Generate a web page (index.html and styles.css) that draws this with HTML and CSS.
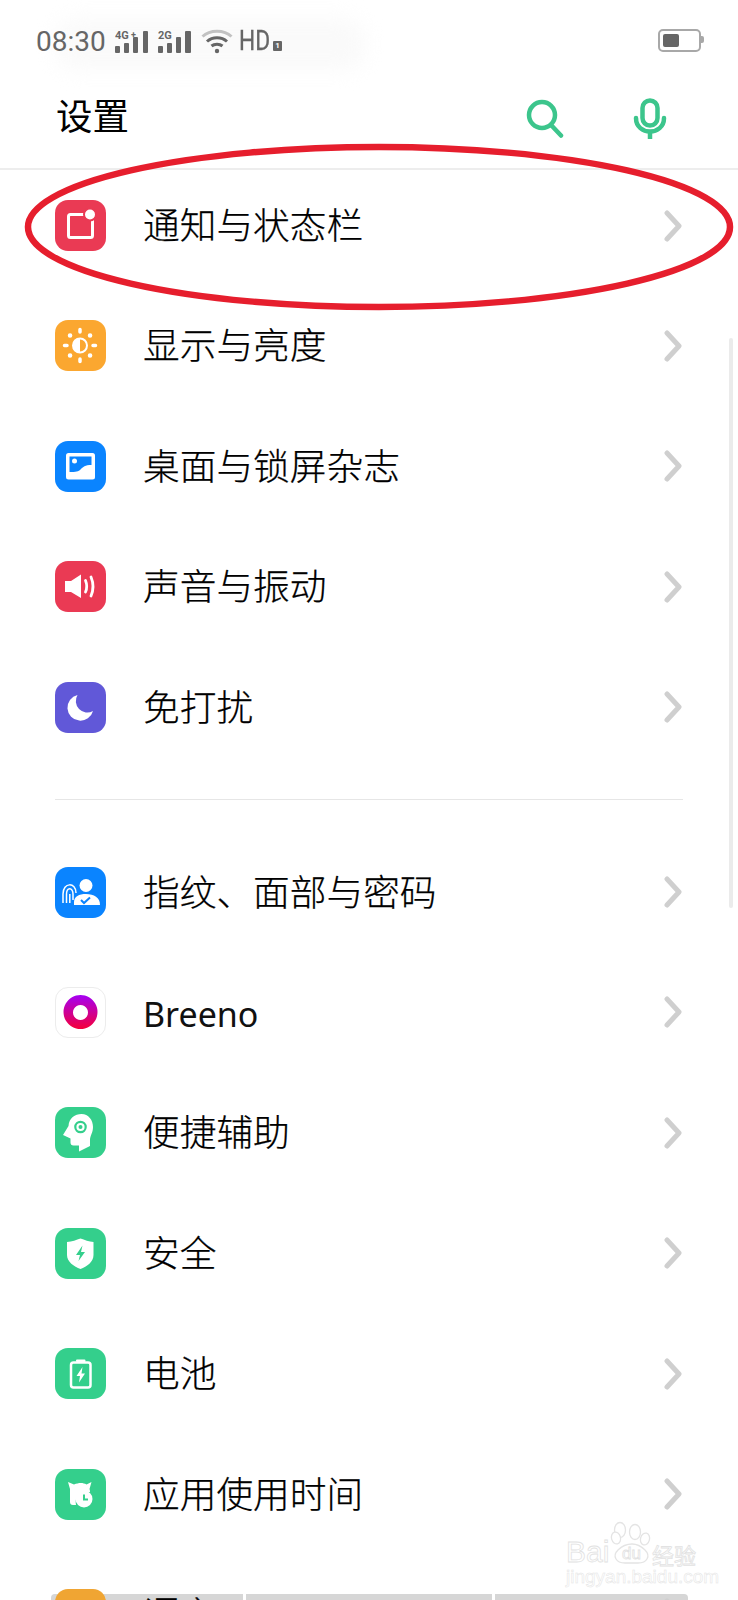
FILE: index.html
```html
<!DOCTYPE html>
<html lang="zh-CN">
<head>
  <meta charset="UTF-8" />
  <meta name="viewport" content="width=device-width, initial-scale=1.0"/>
  <title>设置</title>
  <link rel="stylesheet" href="styles.css">
</head>
<body>
<div class="phone">
  <div class="smudge"></div>

  <!-- status bar -->
  <div class="status">
    <span class="time">08:30</span>
    <svg class="sig-a" width="34" height="24" viewBox="0 0 34 24">
      <text x="0" y="8.5" class="sig-text">4G</text>
      <text x="16" y="8" class="sig-text-sm">+</text>
      <rect x="0" y="16" width="5" height="7" rx="1"/>
      <rect x="9" y="13" width="5" height="10" rx="1"/>
      <rect x="18" y="7" width="5" height="16" rx="1"/>
      <rect x="28" y="1" width="5" height="22" rx="1"/>
    </svg>
    <svg class="sig-b" width="34" height="24" viewBox="0 0 34 24">
      <text x="0" y="8.5" class="sig-text">2G</text>
      <rect x="0" y="16" width="5" height="7" rx="1"/>
      <rect x="9" y="13" width="5" height="10" rx="1"/>
      <rect x="18" y="7" width="5" height="16" rx="1"/>
      <rect x="27" y="1" width="6" height="22" rx="1"/>
    </svg>
    <svg class="wifi" width="32" height="25" viewBox="0 0 32 25" fill="none" stroke-linecap="butt">
      <path d="M1.5 7.5 C9 0.5 23 0.5 30.5 7.5" stroke="#c2c2c2" stroke-width="3"/>
      <path d="M6 12.5 C11.5 7.5 20.5 7.5 26 12.5" stroke="#666" stroke-width="3"/>
      <path d="M10.5 17 C13.5 14.5 18.5 14.5 21.5 17" stroke="#666" stroke-width="3"/>
      <circle cx="16" cy="22" r="2.2" fill="#666"/>
    </svg>
    <span class="hd">HD</span>
    <span class="sim">1</span>
    <span class="battery"><span class="battery-level"></span></span>
  </div>

  <!-- title bar -->
  <header class="title-bar">
    <h1>设置</h1>
    <svg class="tool-search" width="38" height="40" viewBox="0 0 38 40" fill="none" stroke="#3cc58c" stroke-width="4.5" stroke-linecap="round">
      <circle cx="16" cy="16" r="13"/>
      <path d="M26 27 L35 36.5"/>
    </svg>
    <svg class="tool-mic" width="34" height="42" viewBox="0 0 34 42" fill="none" stroke="#3cc58c" stroke-width="4.5">
      <rect x="9.5" y="2.5" width="15" height="25" rx="7.5"/>
      <path d="M3 20 C3 38 31 38 31 20" stroke-linecap="round"/>
      <path d="M17 33 V41"/>
    </svg>
  </header>

  <ul class="group group-one">
    <li class="row">
      <span class="icon red">
        <svg viewBox="0 0 51 51">
          <rect x="13.5" y="14.5" width="24" height="23" rx="2" fill="none" stroke="#fff" stroke-width="3"/>
          <circle cx="35" cy="14.5" r="6" fill="#fff" stroke="#ea3a54" stroke-width="2"/>
        </svg>
      </span>
      <span class="label">通知与状态栏</span>
      <svg class="chev" viewBox="0 0 18 32"><path d="M3 3 L15 16 L3 29"/></svg>
    </li>
    <li class="row">
      <span class="icon orange">
        <svg viewBox="0 0 51 51">
          <circle cx="25" cy="25.5" r="7" fill="none" stroke="#fff" stroke-width="2"/>
          <path d="M25 18.5 a7 7 0 0 0 0 14 z" fill="#fff"/>
          <g stroke="#fff" stroke-width="3.5" stroke-linecap="round">
            <path d="M25 9.5 v2.5 M25 39 v2.5 M9.5 25.5 h2.5 M38 25.5 h2.5"/>
            <path d="M15 15.5 h.1 M35 15.5 h.1 M15 35.5 h.1 M35 35.5 h.1" stroke-width="4.5"/>
          </g>
        </svg>
      </span>
      <span class="label">显示与亮度</span>
      <svg class="chev" viewBox="0 0 18 32"><path d="M3 3 L15 16 L3 29"/></svg>
    </li>
    <li class="row">
      <span class="icon blue">
        <svg viewBox="0 0 51 51">
          <rect x="11" y="12" width="29" height="26.5" rx="2.5" fill="#fff"/>
          <path d="M14.5 15.5 H36.5 V24 C30 24 28 26 25.5 28.5 C23.5 30.5 21 31 14.5 31 Z" fill="#0a84ff"/>
          <circle cx="19.5" cy="20" r="2.5" fill="#fff"/>
        </svg>
      </span>
      <span class="label">桌面与锁屏杂志</span>
      <svg class="chev" viewBox="0 0 18 32"><path d="M3 3 L15 16 L3 29"/></svg>
    </li>
    <li class="row">
      <span class="icon red">
        <svg viewBox="0 0 51 51">
          <path d="M10 20 H16 L26 13.5 V37 L16 31 H10 Z" fill="#fff"/>
          <g fill="none" stroke="#fff" stroke-width="2.8" stroke-linecap="round">
            <path d="M30.5 19.5 Q33 25.5 30.5 31"/>
            <path d="M36 16 Q40 25.5 36 35"/>
          </g>
        </svg>
      </span>
      <span class="label">声音与振动</span>
      <svg class="chev" viewBox="0 0 18 32"><path d="M3 3 L15 16 L3 29"/></svg>
    </li>
    <li class="row">
      <span class="icon purple">
        <svg viewBox="0 0 51 51">
          <path d="M22.5 13 A13 13 0 1 0 38 29 A11.5 11.5 0 0 1 22.5 13 Z" fill="#fff"/>
        </svg>
      </span>
      <span class="label">免打扰</span>
      <svg class="chev" viewBox="0 0 18 32"><path d="M3 3 L15 16 L3 29"/></svg>
    </li>
  </ul>

  <div class="divider"></div>

  <ul class="group">
    <li class="row">
      <span class="icon blue">
        <svg viewBox="0 0 51 51">
          <circle cx="31" cy="18.5" r="6.5" fill="#fff"/>
          <path d="M19 38 V35 C19 29.5 24 27 31 27 C39 27 45 30.5 45 38 Z" fill="#fff"/>
          <path d="M26 33 L29 36 L35 30.5" fill="none" stroke="#0a84ff" stroke-width="2"/>
          <g fill="none" stroke="#fff" stroke-width="1.5">
            <path d="M8 36 V27 C8 15 21 15 21 26"/>
            <path d="M11.5 36 V27.5 C11.5 20 18 20 18 27 V33"/>
            <path d="M14.8 36 V27"/>
          </g>
        </svg>
      </span>
      <span class="label">指纹、面部与密码</span>
      <svg class="chev" viewBox="0 0 18 32"><path d="M3 3 L15 16 L3 29"/></svg>
    </li>
    <li class="row">
      <span class="icon plain">
        <svg viewBox="0 0 51 51">
          <defs>
            <linearGradient id="breeno" x1="0" y1="0" x2="0" y2="1">
              <stop offset="0" stop-color="#a400f5"/>
              <stop offset="1" stop-color="#f5003a"/>
            </linearGradient>
          </defs>
          <path fill-rule="evenodd" fill="url(#breeno)" d="M25.5 8 a17 17 0 1 0 .01 0 z M25.5 18 a7.5 7.5 0 1 1 -.01 0 z"/>
        </svg>
      </span>
      <span class="label latin">Breeno</span>
      <svg class="chev" viewBox="0 0 18 32"><path d="M3 3 L15 16 L3 29"/></svg>
    </li>
    <li class="row">
      <span class="icon green">
        <svg viewBox="0 0 51 51">
          <path d="M13.5 19 C14 11 20 7 26.5 7 C33.5 7 38 13 38 20 C38 26 35 28.5 35 33 V39 L24 44.5 V38.5 H18.5 Q15.5 38.5 15.5 35.5 V31.5 L8 28 Z" fill="#fff"/>
          <circle cx="25.5" cy="20" r="5.2" fill="none" stroke="#34cf8c" stroke-width="2.2"/>
          <circle cx="25.5" cy="20" r="2" fill="#34cf8c"/>
        </svg>
      </span>
      <span class="label">便捷辅助</span>
      <svg class="chev" viewBox="0 0 18 32"><path d="M3 3 L15 16 L3 29"/></svg>
    </li>
    <li class="row">
      <span class="icon green">
        <svg viewBox="0 0 51 51">
          <path d="M12 14 C17 13.5 21.5 12 25.5 10.5 C29.5 12 34 13.5 38.5 14 V27 C38.5 34 32 38.5 25.5 41 C19 38.5 12 34 12 27 Z" fill="#fff"/>
          <path d="M27.5 17.5 L21 27 H25 L23.5 33 L30 24 H26 Z" fill="#34cf8c"/>
        </svg>
      </span>
      <span class="label">安全</span>
      <svg class="chev" viewBox="0 0 18 32"><path d="M3 3 L15 16 L3 29"/></svg>
    </li>
    <li class="row">
      <span class="icon green">
        <svg viewBox="0 0 51 51">
          <rect x="16" y="14.5" width="19.5" height="25" rx="2.5" fill="none" stroke="#fff" stroke-width="2.5"/>
          <rect x="21" y="11.5" width="9.5" height="2.5" rx="1" fill="#fff"/>
          <path d="M27.5 19 L21.5 28 H25 L24 34.5 L30 25.5 H26.5 Z" fill="#fff"/>
        </svg>
      </span>
      <span class="label">电池</span>
      <svg class="chev" viewBox="0 0 18 32"><path d="M3 3 L15 16 L3 29"/></svg>
    </li>
    <li class="row">
      <span class="icon green">
        <svg viewBox="0 0 51 51">
          <path d="M13 13 L19 15.5 C24 13.5 28 13.5 31.5 15.5 L36.5 13 L34.5 20 C35 21 35 22 35 23 H26 C22 25 20 30 21 36 H18 Q15 36 15 33 V20 Z" fill="#fff"/>
          <circle cx="29" cy="30" r="8.5" fill="#fff"/>
          <path d="M29 25.5 V30.5 H33" fill="none" stroke="#34cf8c" stroke-width="2"/>
        </svg>
      </span>
      <span class="label">应用使用时间</span>
      <svg class="chev" viewBox="0 0 18 32"><path d="M3 3 L15 16 L3 29"/></svg>
    </li>
    <li class="row">
      <span class="icon amber"></span>
      <span class="label">语言</span>
      <svg class="chev" viewBox="0 0 18 32"><path d="M3 3 L15 16 L3 29"/></svg>
    </li>
  </ul>

  <!-- things lying over the screen -->
  <div class="scrollbar"></div>

  <svg class="mark-ring" width="738" height="340" viewBox="0 0 738 340" fill="none">
    <ellipse cx="379" cy="227" rx="351" ry="80" stroke="#e61e2d" stroke-width="6.5"/>
  </svg>

  <div class="strip">
    <span class="strip-a"></span>
    <span class="strip-b"></span>
    <span class="strip-c"></span>
  </div>

  <div class="watermark">
    <svg class="paw" width="140" height="72" viewBox="0 0 140 72" fill="#fff" stroke="#e4e4e4" stroke-width="1.3">
      <ellipse cx="54" cy="14" rx="5.5" ry="7.5"/>
      <ellipse cx="69" cy="16" rx="5.5" ry="7.5"/>
      <ellipse cx="50" cy="22" rx="4.5" ry="6" transform="rotate(-15 50 22)"/>
      <ellipse cx="79" cy="23" rx="4.5" ry="6" transform="rotate(15 79 23)"/>
      <path d="M66 28 C72 28 75 30 79 34 C85 40 81 47 72 47 H59 C50 47 46 40 52 34 C56 30 60 28 66 28 Z"/>
    </svg>
    <span class="wm-bai">Bai</span>
    <span class="wm-du">du</span>
    <span class="wm-jy">经验</span>
    <span class="wm-url">jingyan.baidu.com</span>
  </div>
</div>
</body>
</html>
```

FILE: styles.css
```css
* {
  margin: 0;
  padding: 0;
  box-sizing: border-box;
}
html, body {
  width: 738px;
  height: 1600px;
  overflow: hidden;
  background: #fff;
}
body {
  font-family: "Noto Sans CJK SC", "Noto Sans", sans-serif;
  color: #111;
}
.phone {
  position: relative;
  width: 738px;
  height: 1600px;
  overflow: hidden;
}

/* status bar */
.status {
  position: relative;
  display: flex;
  align-items: center;
  height: 82px;
  padding: 0 37px 0 36px;
  color: #666;
  font-family: Roboto, sans-serif;
}
.time {
  font-size: 28px;
  width: 79px;
}
.status svg rect {
  fill: #666;
}
.sig-a,
.sig-b {
  margin-right: 9px;
  margin-top: 2px;
}
.sig-text {
  font: 700 11px Roboto, sans-serif;
  fill: #666;
}
.sig-text-sm {
  font: 700 9px Roboto, sans-serif;
  fill: #666;
}
.hd {
  font-size: 27px;
  margin-left: 6px;
  width: 29px;
  transform: scaleX(0.84);
  transform-origin: left center;
  -webkit-text-stroke: 0.3px #666;
}
.sim {
  width: 9px;
  height: 10px;
  margin: 10px 0 0 5px;
  background: #666;
  border-radius: 1px;
  color: #fff;
  font-size: 8px;
  font-weight: 700;
  line-height: 10px;
  text-align: center;
}
.battery {
  position: relative;
  width: 43px;
  height: 23px;
  margin-left: auto;
  margin-top: -1px;
  padding: 3px;
  border: 2px solid #a8a8a8;
  border-radius: 5px;
}
.battery::after {
  content: "";
  position: absolute;
  right: -5px;
  top: 5px;
  width: 3px;
  height: 7px;
  background: #a8a8a8;
  border-radius: 0 2px 2px 0;
}
.battery-level {
  display: block;
  width: 16px;
  height: 100%;
  background: #666;
  border-radius: 2px;
}
.smudge {
  position: absolute;
  left: 55px;
  top: 18px;
  width: 310px;
  height: 52px;
  background: #fafafa;
  border-radius: 20px;
  filter: blur(10px);
}

/* title bar */
.title-bar {
  position: relative;
  display: flex;
  align-items: center;
  height: 88px;
  padding: 0 0 20px 56px;
  border-bottom: 2px solid #ededed;
}
.title-bar h1 {
  font-size: 36.5px;
  font-weight: 400;
  line-height: 1;
  color: #000;
  flex: 1;
}
.tool-search {
  margin-right: 69px;
  margin-top: 7px;
}
.tool-mic {
  margin-right: 71px;
  margin-top: 7px;
}

/* rows */
.group {
  position: relative;
  z-index: 1;
  list-style: none;
  display: flex;
  flex-direction: column;
  gap: 69.4px;
}
.group-one {
  padding-top: 30px;
}
.row {
  display: flex;
  align-items: center;
  height: 51px;
  padding: 0 56px 0 55px;
}
.icon {
  flex: none;
  display: block;
  width: 51px;
  height: 51px;
  border-radius: 13px;
}
.icon svg {
  display: block;
  width: 51px;
  height: 51px;
}
.red { background: #ea3a54; }
.orange { background: #fba730; }
.blue { background: #0a84ff; }
.purple { background: #6158d8; }
.green { background: #34cf8c; }
.amber { background: #f0a533; }
.plain {
  background: #fff;
  border: 1px solid #ececec;
}
.plain svg {
  margin: -1px;
}
.label {
  flex: 1;
  margin-left: 37px;
  padding-bottom: 4px;
  font-size: 36.7px;
  font-weight: 300;
  line-height: 47px;
  color: #000;
  -webkit-text-stroke: 0.25px #000;
}
.latin {
  font-family: "Noto Sans", sans-serif;
  font-size: 34px;
  font-weight: 400;
  padding-bottom: 0;
  padding-top: 3px;
  line-height: 48px;
  color: #111;
  -webkit-text-stroke: 0;
}
.chev {
  flex: none;
  width: 18px;
  height: 32px;
  fill: none;
  stroke: #cfcfcf;
  stroke-width: 5;
  stroke-linecap: round;
  stroke-linejoin: round;
}
.divider {
  height: 1px;
  margin: 66px 55px 67px 55px;
  background: #e6e6e6;
}

/* overlays */
.scrollbar {
  position: absolute;
  left: 729px;
  top: 338px;
  width: 4px;
  height: 570px;
  background: #ebebeb;
  border-radius: 2px;
}
.mark-ring {
  position: absolute;
  left: 0;
  top: 0;
  z-index: 2;
}
.strip {
  position: absolute;
  left: 51px;
  top: 1594px;
  display: flex;
  gap: 3px;
  height: 6px;
}
.strip span {
  display: block;
  background: #d6d6d6;
}
.strip-a {
  width: 192px;
  border-top-left-radius: 4px;
}
.strip-b {
  width: 246px;
}
.strip-c {
  width: 193px;
  border-top-right-radius: 4px;
}
.watermark {
  position: absolute;
  left: 566px;
  top: 1516px;
  z-index: 2;
  width: 140px;
  height: 72px;
  color: #fff;
  -webkit-text-stroke: 0.8px #e2e2e2;
  font-family: "Liberation Sans", sans-serif;
}
.paw {
  position: absolute;
  left: 0;
  top: 0;
}
.wm-bai,
.wm-du,
.wm-jy,
.wm-url {
  position: absolute;
  white-space: nowrap;
}
.wm-bai {
  left: 0;
  top: 20px;
  font-size: 30px;
  line-height: 32px;
}
.wm-du {
  left: 56px;
  top: 29px;
  font-size: 17px;
  line-height: 18px;
}
.wm-jy {
  left: 86px;
  top: 26px;
  font-family: "Noto Sans CJK SC", sans-serif;
  font-size: 22px;
  line-height: 24px;
}
.wm-url {
  left: 0;
  top: 50px;
  font-size: 19px;
  line-height: 22px;
  -webkit-text-stroke: 0.5px #e4e4e4;
}
```
